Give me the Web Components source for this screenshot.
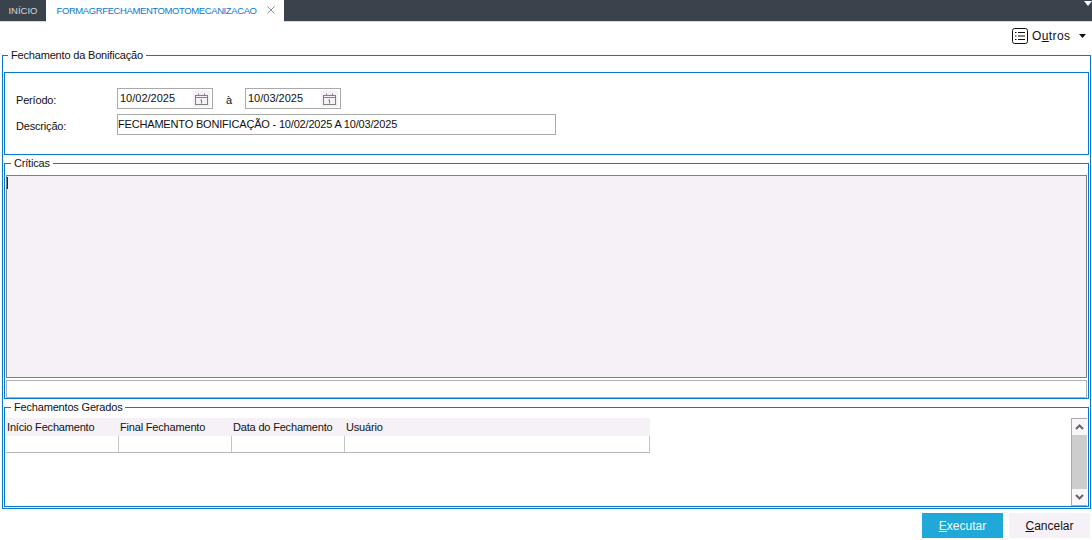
<!DOCTYPE html>
<html>
<head>
<meta charset="utf-8">
<style>
  html, body { margin: 0; padding: 0; background: #fff; }
  body { font: 11px "Liberation Sans", Arial, sans-serif; letter-spacing: -0.18px; color: #111; width: 1092px; height: 540px; overflow: hidden; }
</style>
</head>
<body>
<app-tabs></app-tabs>
<app-toolbar></app-toolbar>
<group-box label="Fechamento da Bonificação" style="--gb-margin:0 1px 0 2px; --gb-height:454px; --gb-pad:0 1px;">
  <group-box plain style="--gb-margin:16px 0 0 0; --gb-height:83px;">
    <period-form></period-form>
  </group-box>
  <group-box label="Críticas" style="--gb-margin:8px 0 0 0; --gb-height:236px; --gb-pad:0 1px; --gb-legend:6px;">
    <criticas-panel></criticas-panel>
  </group-box>
  <group-box label="Fechamentos Gerados" style="--gb-margin:8px 0 0 0; --gb-height:100px; --gb-legend:6px;">
    <closings-grid></closings-grid>
  </group-box>
</group-box>
<form-actions></form-actions>

<script>
class AppTabs extends HTMLElement {
  constructor() {
    super();
    this.attachShadow({ mode: "open" }).innerHTML = `
      <style>
        :host { display: flex; box-sizing: border-box; height: 22px; background: #3a424c; border-bottom: 1px solid #d8d8d8; position: relative; }
        .tab { display: flex; align-items: center; font-size: 9.5px; letter-spacing: 0; }
        .home { width: 46px; justify-content: center; color: #d5d8dc; }
        .active { width: 238px; margin-bottom: -1px; padding: 0 0 1px 10.500px; background: #fff; color: #0a78d0; box-sizing: border-box; white-space: nowrap; letter-spacing: -0.4px; }
        .active svg { position: absolute; left: 267px; top: 6px; }
        .corner { position: absolute; right: 0; top: 1px; }
      </style>
      <div class="tab home">INÍCIO</div>
      <div class="tab active">FORMAGRFECHAMENTOMOTOMECANIZACAO
        <svg width="8" height="8" viewBox="0 0 8 8"><path d="M.5.5l7 7M7.5.5l-7 7" stroke="#8a8f96" fill="none"/></svg>
      </div>
      <svg class="corner" width="8" height="6" viewBox="0 0 8 6"><path d="M0 0h8L4 5z" fill="#fff"/></svg>`;
  }
}

class AppToolbar extends HTMLElement {
  constructor() {
    super();
    this.attachShadow({ mode: "open" }).innerHTML = `
      <style>
        :host { display: flex; justify-content: flex-end; align-items: center; height: 33px; padding: 0 6px 5px 0; box-sizing: border-box; font-size: 12px; letter-spacing: 0; }
        svg { display: block; }
        u { text-underline-offset: 1px; }
        .label { width: 38px; margin: 0 9px 0 4px; white-space: nowrap; letter-spacing: .4px; }
      </style>
      <svg width="16" height="16" viewBox="0 0 16 16" fill="none" stroke="#111">
        <rect x=".5" y=".5" width="15" height="15" rx="2"/>
        <path d="M6 4.500h7M6 8h7M6 11.500h7"/>
        <path d="M3 4.500h1.500M3 8h1.500M3 11.500h1.500"/>
      </svg>
      <span class="label">O<u>u</u>tros</span>
      <svg width="7" height="4" viewBox="0 0 7 4"><path d="M0 0h7L3.500 4z" fill="#111"/></svg>`;
  }
}

class GroupBox extends HTMLElement {
  constructor() {
    super();
    this.attachShadow({ mode: "open" }).innerHTML = `
      <style>
        :host { display: block; position: relative; box-sizing: border-box; margin: var(--gb-margin, 0); height: var(--gb-height, auto); border: 1px solid #0a78d0; padding: var(--gb-pad, 0); }
        .legend { position: absolute; left: var(--gb-legend, 5px); top: -9px; padding: 0 3px; background: #fff; line-height: 16px; white-space: nowrap; }
      </style>
      <div class="legend"></div>
      <slot></slot>`;
  }
  connectedCallback() {
    const legend = this.shadowRoot.querySelector(".legend");
    const label = this.getAttribute("label");
    if (label) legend.textContent = label;
    else legend.remove();
  }
}

class DateField extends HTMLElement {
  constructor() {
    super();
    this.attachShadow({ mode: "open" }).innerHTML = `
      <style>
        :host { display: flex; align-items: center; justify-content: space-between; box-sizing: border-box; width: 96px; height: 21px; border: 1px solid #a9a9a9; padding: 0 2px 1px 2px; background: #fff; letter-spacing: 0; }
        .btn { display: flex; align-items: center; justify-content: center; width: 17px; height: 17px; background: #f5f1f6; margin-top: 1px; }
      </style>
      <slot></slot>
      <div class="btn">
        <svg width="13" height="12" viewBox="0 0 13 12" fill="none" stroke="#808080">
          <rect x=".5" y="2.500" width="12" height="9"/>
          <path d="M.5 4.500h12M3.500.5v2M9.500.5v2M5.500 7l1-.5v4"/>
        </svg>
      </div>`;
  }
}

class PeriodForm extends HTMLElement {
  constructor() {
    super();
    this.attachShadow({ mode: "open" }).innerHTML = `
      <style>
        :host { display: grid; grid-template-columns: 101px auto; row-gap: 5px; padding: 15px 0 0 10px; align-items: center; }
        .lbl { padding-top: 3px; }
        .lbl2 { padding-top: 2px; }
        .dates { display: flex; align-items: center; }
        .sep { width: 32px; text-align: center; padding-top: 2px; }
        .text { box-sizing: border-box; width: 439px; height: 21px; border: 1px solid #a9a9a9; line-height: 19px; white-space: nowrap; }
      </style>
      <div class="lbl">Período:</div>
      <div class="dates">
        <date-field>10/02/2025</date-field>
        <div class="sep">à</div>
        <date-field>10/03/2025</date-field>
      </div>
      <div class="lbl2">Descrição:</div>
      <div class="text">FECHAMENTO BONIFICAÇÃO - 10/02/2025 A 10/03/2025</div>`;
  }
}

class CriticasPanel extends HTMLElement {
  constructor() {
    super();
    this.attachShadow({ mode: "open" }).innerHTML = `
      <style>
        :host { display: block; padding-top: 11px; }
        .log { position: relative; box-sizing: border-box; height: 203px; background: #f5f1f6; border: 1px solid #808080; }
        .caret { position: absolute; left: 0; top: 1px; width: 1px; height: 12px; background: #0a2a6a; }
        .status { box-sizing: border-box; height: 18px; margin-top: 2px; border: 1px solid #b0b0b0; }
      </style>
      <div class="log"><div class="caret"></div></div>
      <div class="status"></div>`;
  }
}

class ClosingsGrid extends HTMLElement {
  constructor() {
    super();
    const cols = ["Início Fechamento", "Final Fechamento", "Data do Fechamento", "Usuário"];
    this.attachShadow({ mode: "open" }).innerHTML = `
      <style>
        :host { display: flex; justify-content: space-between; padding-top: 10px; height: 100%; box-sizing: border-box; }
        .table { width: 644px; }
        .row { display: grid; grid-template-columns: 113px 113px 113px 1fr; }
        .head { height: 18px; background: #f5f1f6; line-height: 18px; white-space: nowrap; }
        .head div { padding-left: 1px; }
        .body { height: 17px; box-sizing: border-box; border-bottom: 1px solid #b8b8b8; }
        .body div { border-right: 1px solid #c4c4c4; }
        .scroll { display: flex; flex-direction: column; width: 16px; height: 88px; border: 1px solid #a9a9a9; border-width: 1px 0 1px 1px; box-sizing: border-box; background: #fff; }
        .arrow { height: 16px; display: flex; align-items: center; justify-content: center; flex: none; background: #f8f6f9; }
        .thumb { flex: 1; background: #cdcdcd; }
      </style>
      <div class="table">
        <div class="row head">${cols.map((c) => `<div>${c}</div>`).join("")}</div>
        <div class="row body"><div></div><div></div><div></div><div></div></div>
      </div>
      <div class="scroll">
        <div class="arrow"><svg width="9" height="6" viewBox="0 0 9 6"><path d="M1 5l3.500-3.500L8 5" fill="none" stroke="#666" stroke-width="2"/></svg></div>
        <div class="thumb"></div>
        <div class="arrow"><svg width="9" height="6" viewBox="0 0 9 6"><path d="M1 1l3.500 3.500L8 1" fill="none" stroke="#666" stroke-width="2"/></svg></div>
      </div>`;
  }
}

class FormActions extends HTMLElement {
  constructor() {
    super();
    this.attachShadow({ mode: "open" }).innerHTML = `
      <style>
        :host { display: flex; justify-content: flex-end; gap: 6px; padding: 4px 2px 0 0; }
        .btn { display: flex; align-items: center; justify-content: center; width: 81px; height: 25px; font-size: 12px; letter-spacing: 0; }
        .primary { background: #1fa8d8; color: #f2fafd; }
        .secondary { background: #f5f1f6; }
      </style>
      <div class="btn primary"><span><u>E</u>xecutar</span></div>
      <div class="btn secondary"><span><u>C</u>ancelar</span></div>`;
  }
}

customElements.define("app-tabs", AppTabs);
customElements.define("app-toolbar", AppToolbar);
customElements.define("group-box", GroupBox);
customElements.define("date-field", DateField);
customElements.define("period-form", PeriodForm);
customElements.define("criticas-panel", CriticasPanel);
customElements.define("closings-grid", ClosingsGrid);
customElements.define("form-actions", FormActions);
</script>
</body>
</html>
